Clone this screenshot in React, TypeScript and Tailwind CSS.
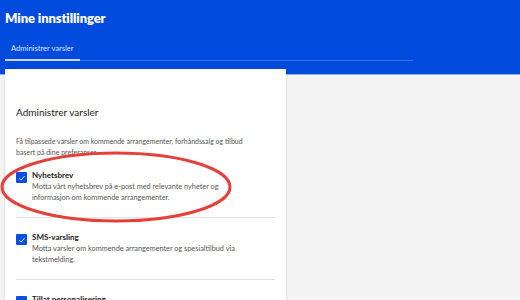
export default function App() {
  const items = [
    {
      title: "Nyhetsbrev",
      text: "Motta vårt nyhetsbrev på e-post med relevante nyheter og informasjon om kommende arrangementer.",
    },
    {
      title: "SMS-varsling",
      text: "Motta varsler om kommende arrangementer og spesialtilbud via tekstmelding.",
    },
    {
      title: "Tillat personalisering",
      text: "Vi bruker dine preferanser til å tilpasse innholdet du ser.",
    },
  ];
  return (
    <div className="relative w-[520px] h-[300px] overflow-hidden bg-[#f4f4f4] font-['Lato',sans-serif]">
      <div className="h-[75px] bg-[#004add] border-b border-[#8fb0ee] px-[5px] pt-[7px]">
        <h1 className="text-white text-[13px] font-extrabold leading-[22px] tracking-[-0.1px]">Mine innstillinger</h1>
        <div className="mt-[14px] w-[408px] border-b border-[#3a73e6] relative">
          <div className="w-[75px] border-b-2 border-[#c9d8f8] -mb-[1px] pl-[6px] pb-[6px] text-[7.6px] leading-[10px] text-[#dfe8fb]">
            Administrer varsler
          </div>
        </div>
      </div>
      <div className="-mt-[6px] ml-[5px] w-[281px] h-[240px] bg-white shadow-[0_0_3px_rgba(0,0,0,0.12)] px-[11px] pt-[37px]">
        <h2 className="text-[10px] leading-[12px] text-[#222]">Administrer varsler</h2>
        <p className="mt-[18px] w-[236px] text-[7px] leading-[11px] text-[#555]">
          Få tilpassede varsler om kommende arrangementer, forhåndssalg og tilbud basert på dine preferanser.
        </p>
        <div className="mt-[12px] flex flex-col">
          {items.map((it, i) => (
            <div key={i} className={`flex gap-[5px] ${i < 2 ? "pb-[14px] border-b border-[#e2e2e2] mb-[14px]" : ""}`}>
              <div className="mt-[2px] w-[11px] h-[11px] shrink-0 rounded-[1px] bg-[#0a4fe0] flex items-center justify-center">
                <svg viewBox="0 0 12 12" className="w-[8px] h-[8px]">
                  <path d="M2 6.5 L4.8 9 L10 3" fill="none" stroke="white" strokeWidth="1.3" />
                </svg>
              </div>
              <div className="w-[225px]">
                <div className="text-[8px] leading-[11px] font-bold text-[#222]">{it.title}</div>
                <div className="text-[7.3px] leading-[11px] text-[#555]">{it.text}</div>
              </div>
            </div>
          ))}
        </div>
      </div>
      <svg className="absolute left-0 top-0 pointer-events-none" width="520" height="300">
        <ellipse cx="116" cy="187" rx="114" ry="34" fill="none" stroke="#e5413b" strokeWidth="3" />
      </svg>
    </div>
  );
}
